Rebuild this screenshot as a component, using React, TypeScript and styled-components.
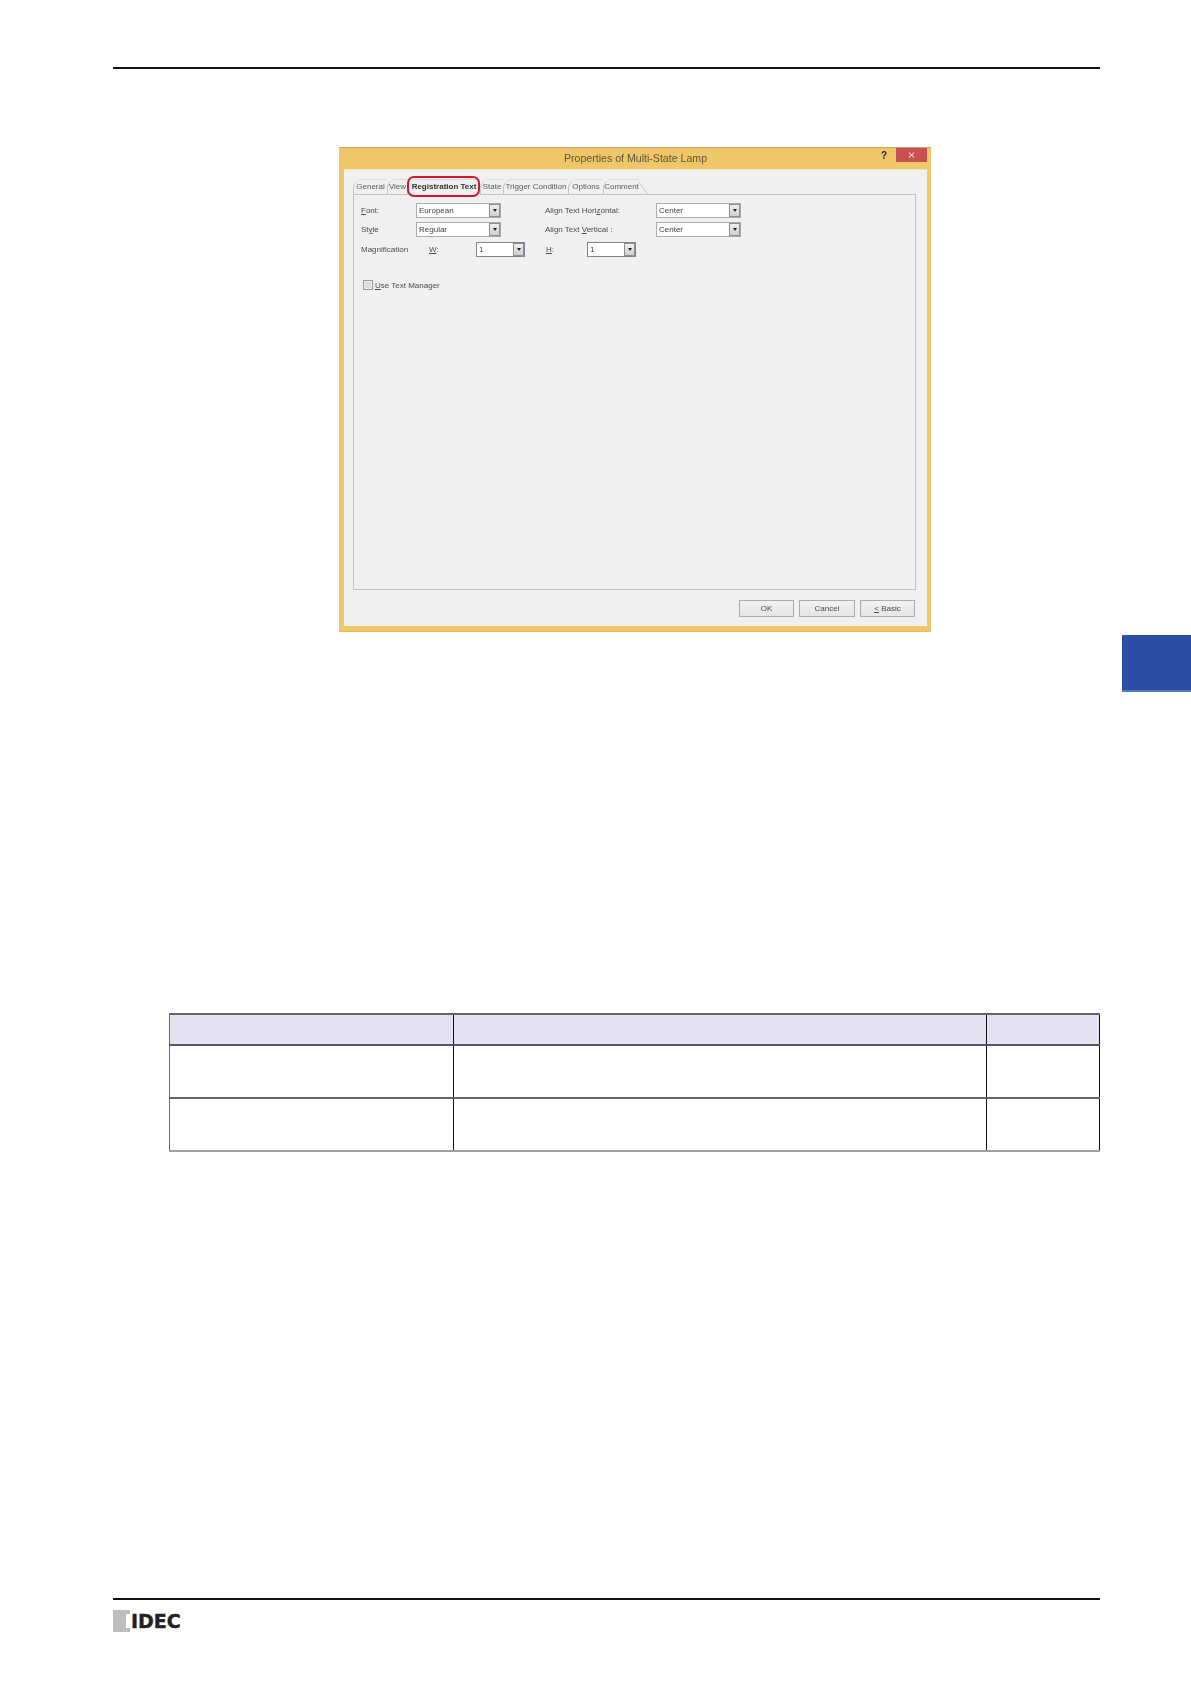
import React from "react";
import styled, { createGlobalStyle } from "styled-components";

const GlobalStyle = createGlobalStyle`
  html, body {
    margin: 0;
    padding: 0;
    background: #ffffff;
  }
  body {
    font-family: "Liberation Sans", Arial, sans-serif;
  }
`;

const Page = styled.div`
  position: relative;
  width: 1191px;
  height: 1684px;
  box-sizing: border-box;
  padding: 67px 91px 0 113px;
  overflow: hidden;
`;

const Rule = styled.div`
  height: 2px;
  background: #111111;
`;

const ChapterTab = styled.div`
  position: absolute;
  top: 635px;
  right: 0;
  width: 69px;
  height: 57px;
  background: #2b4ea5;
  border-bottom: 2px solid #5a78bd;
  box-sizing: border-box;
`;

const Dialog = styled.div`
  width: 592px;
  height: 485px;
  margin: 78px 0 0 226px;
  box-sizing: border-box;
  padding: 0 4px 5px 5px;
  display: flex;
  flex-direction: column;
  background: #eec769;
  border-top: 1px solid #c9a95f;
  border-bottom: 1px solid #e3bb62;
  filter: blur(0.3px);
`;

const TitleBar = styled.div`
  position: relative;
  flex: 0 0 21px;
  box-sizing: border-box;
  padding-bottom: 2px;
  display: flex;
  align-items: center;
  justify-content: center;
  font-size: 10.6px;
  color: #5f5336;
`;

const TitleControls = styled.div`
  position: absolute;
  top: 0;
  right: 0;
  display: flex;
  align-items: center;
`;

const HelpMark = styled.span`
  font-size: 10px;
  font-weight: 700;
  color: #2a2a2a;
  margin-right: 9px;
`;

const CloseButton = styled.div`
  width: 31px;
  height: 14px;
  background: #c75050;
  display: flex;
  align-items: center;
  justify-content: center;
  color: #ffffff;
`;

const Body = styled.div`
  flex: 1;
  box-sizing: border-box;
  background: #f0f0f0;
  padding: 9px 11px 9px 9px;
  display: flex;
  flex-direction: column;
  border-top: 1px solid #f7e3b0;
`;

const TabStrip = styled.div`
  display: flex;
  height: 15px;
  position: relative;
  z-index: 1;
`;

const Tab = styled.div<{ $w: number; $active?: boolean }>`
  position: relative;
  width: ${(p) => p.$w}px;
  height: ${(p) => (p.$active ? 16 : 15)}px;
  box-sizing: border-box;
  padding-bottom: ${(p) => (p.$active ? 2 : 1)}px;
  display: flex;
  align-items: center;
  justify-content: center;
  font-size: 8px;
  font-weight: ${(p) => (p.$active ? 700 : 400)};
  color: ${(p) => (p.$active ? "#333333" : "#5a5a5a")};
  white-space: nowrap;
  border-left: 1px solid #c6c6c6;
  border-top: 1px solid #dcdcdc;
  border-top-left-radius: 9px;
  background: #f0f0f0;
`;

const LastTab = styled(Tab)`
  &::after {
    content: "";
    position: absolute;
    top: 2px;
    right: -5px;
    width: 0;
    height: 13px;
    border-right: 1px solid #c6c6c6;
    transform: skewX(35deg);
  }
`;

const TabHighlight = styled.div`
  position: absolute;
  top: -4px;
  left: -1px;
  width: 73px;
  height: 21px;
  box-sizing: border-box;
  border: 2px solid #d3172f;
  border-radius: 7px;
`;

const Panel = styled.div`
  flex: 1;
  box-sizing: border-box;
  border: 1px solid #c2c2c2;
  padding: 8px 0 0 7px;
  display: flex;
  flex-direction: column;
  gap: 4px;
`;

const Row = styled.div`
  display: flex;
  align-items: center;
  height: 15px;
`;

const MagnificationRow = styled(Row)`
  margin-top: 1px;
`;

const FieldLabel = styled.span<{ $w: number; $ml?: number }>`
  width: ${(p) => p.$w}px;
  margin-left: ${(p) => p.$ml ?? 0}px;
  flex: none;
  font-size: 8px;
  color: #4a4a4a;
  white-space: nowrap;
`;

const Select = styled.div<{ $w: number; $dark?: boolean }>`
  width: ${(p) => p.$w}px;
  height: 15px;
  flex: none;
  box-sizing: border-box;
  display: flex;
  align-items: center;
  justify-content: space-between;
  padding: 0 0 0 2px;
  background: #ffffff;
  border: 1px solid ${(p) => (p.$dark ? "#7f8290" : "#ababab")};
  font-size: 8px;
  color: #3c3c3c;
`;

const SelectArrow = styled.span`
  width: 11px;
  height: 13px;
  box-sizing: border-box;
  border: 1px solid #8f8f8f;
  background: linear-gradient(#f0f0f0, #cfcfcf);
  display: flex;
  align-items: center;
  justify-content: center;

  &::after {
    content: "";
    border-left: 2px solid transparent;
    border-right: 2px solid transparent;
    border-top: 3px solid #222222;
  }
`;

const CheckRow = styled.label`
  display: flex;
  align-items: center;
  gap: 2px;
  margin: 19px 0 0 2px;
  font-size: 8px;
  color: #4a4a4a;
`;

const CheckBox = styled.span`
  width: 10px;
  height: 10px;
  box-sizing: border-box;
  border: 1px solid #9a9a9a;
  background: #dedede;
  box-shadow: inset 0 0 0 1px #f0f0f0;
`;

const ButtonRow = styled.div`
  display: flex;
  justify-content: flex-end;
  gap: 5px;
  margin-top: 10px;
  padding-right: 1px;
`;

const DialogButton = styled.div<{ $w: number }>`
  width: ${(p) => p.$w}px;
  height: 17px;
  box-sizing: border-box;
  display: flex;
  align-items: center;
  justify-content: center;
  font-size: 8px;
  color: #4a4a4a;
  border: 1px solid #acacac;
  background: linear-gradient(#f2f2f2, #e5e5e5);
`;

const InfoTable = styled.table`
  width: 930px;
  margin: 381px 0 0 56px;
  border-collapse: collapse;
  table-layout: fixed;
  border-top: 2px solid #666666;
  border-bottom: 2px solid #a0a0a0;
  border-left: 1px solid #666666;
  border-right: 1px solid #222222;
`;

const HeaderCell = styled.th`
  height: 29px;
  padding: 0;
  background: #e3e1f2;
  border-right: 1px solid #111111;
  border-bottom: 2px solid #555566;
`;

const BodyCell = styled.td`
  height: 51px;
  padding: 0;
  border-right: 1px solid #111111;
  border-bottom: 2px solid #666666;

  tr:last-child > & {
    border-bottom: none;
  }
`;

const Footer = styled.div`
  margin-top: 446px;
`;

const Brand = styled.div`
  display: flex;
  align-items: center;
  height: 22px;
  margin-top: 10px;
`;

const BrandBlock = styled.div`
  width: 17px;
  height: 22px;
  box-sizing: border-box;
  background: #bdbdbd;
  display: flex;
  justify-content: flex-end;
  align-items: center;

  &::after {
    content: "";
    width: 4px;
    height: 14px;
    background: #ffffff;
  }
`;

const BrandName = styled.span`
  margin-left: 1px;
  font-family: "DejaVu Sans", sans-serif;
  font-size: 19px;
  line-height: 22px;
  font-weight: 700;
  color: #222222;
  -webkit-text-stroke: 0.4px #222222;
`;

const selects = {
  font: "European",
  style: "Regular",
  align: "Center",
};

export default function App() {
  return (
    <Page>
      <GlobalStyle />
      <Rule />
      <ChapterTab />

      <Dialog>
        <TitleBar>
          Properties of Multi-State Lamp
          <TitleControls>
            <HelpMark>?</HelpMark>
            <CloseButton>
              <svg width="7" height="6" viewBox="0 0 7 6">
                <path d="M0.8 0.5 L6.2 5.5 M6.2 0.5 L0.8 5.5" stroke="#ffffff" strokeWidth="1" />
              </svg>
            </CloseButton>
          </TitleControls>
        </TitleBar>

        <Body>
          <TabStrip>
            <Tab $w={34}>General</Tab>
            <Tab $w={20}>View</Tab>
            <Tab $w={73} $active>
              Registration Text
              <TabHighlight />
            </Tab>
            <Tab $w={23}>State</Tab>
            <Tab $w={65}>Trigger Condition</Tab>
            <Tab $w={35}>Options</Tab>
            <LastTab $w={36}>Comment</LastTab>
          </TabStrip>

          <Panel>
            <Row>
              <FieldLabel $w={55}>
                <u>F</u>ont:
              </FieldLabel>
              <Select $w={85}>
                {selects.font}
                <SelectArrow />
              </Select>
              <FieldLabel $w={111} $ml={44}>
                Align Text Hori<u>z</u>ontal:
              </FieldLabel>
              <Select $w={85}>
                {selects.align}
                <SelectArrow />
              </Select>
            </Row>
            <Row>
              <FieldLabel $w={55}>
                St<u>y</u>le
              </FieldLabel>
              <Select $w={85}>
                {selects.style}
                <SelectArrow />
              </Select>
              <FieldLabel $w={111} $ml={44}>
                Align Text <u>V</u>ertical :
              </FieldLabel>
              <Select $w={85}>
                {selects.align}
                <SelectArrow />
              </Select>
            </Row>
            <MagnificationRow>
              <FieldLabel $w={68}>Magnification</FieldLabel>
              <FieldLabel $w={47}>
                <u>W</u>:
              </FieldLabel>
              <Select $w={49} $dark>
                1
                <SelectArrow />
              </Select>
              <FieldLabel $w={41} $ml={21}>
                <u>H</u>:
              </FieldLabel>
              <Select $w={49} $dark>
                1
                <SelectArrow />
              </Select>
            </MagnificationRow>
            <CheckRow>
              <CheckBox />
              <span>
                <u>U</u>se Text Manager
              </span>
            </CheckRow>
          </Panel>

          <ButtonRow>
            <DialogButton $w={55}>OK</DialogButton>
            <DialogButton $w={56}>Cancel</DialogButton>
            <DialogButton $w={55}>
              <u>&lt;</u>&nbsp;Basic
            </DialogButton>
          </ButtonRow>
        </Body>
      </Dialog>

      <InfoTable>
        <colgroup>
          <col style={{ width: 284 }} />
          <col style={{ width: 533 }} />
          <col style={{ width: 113 }} />
        </colgroup>
        <thead>
          <tr>
            <HeaderCell />
            <HeaderCell />
            <HeaderCell />
          </tr>
        </thead>
        <tbody>
          <tr>
            <BodyCell />
            <BodyCell />
            <BodyCell />
          </tr>
          <tr>
            <BodyCell />
            <BodyCell />
            <BodyCell />
          </tr>
        </tbody>
      </InfoTable>

      <Footer>
        <Rule />
        <Brand>
          <BrandBlock />
          <BrandName>IDEC</BrandName>
        </Brand>
      </Footer>
    </Page>
  );
}
